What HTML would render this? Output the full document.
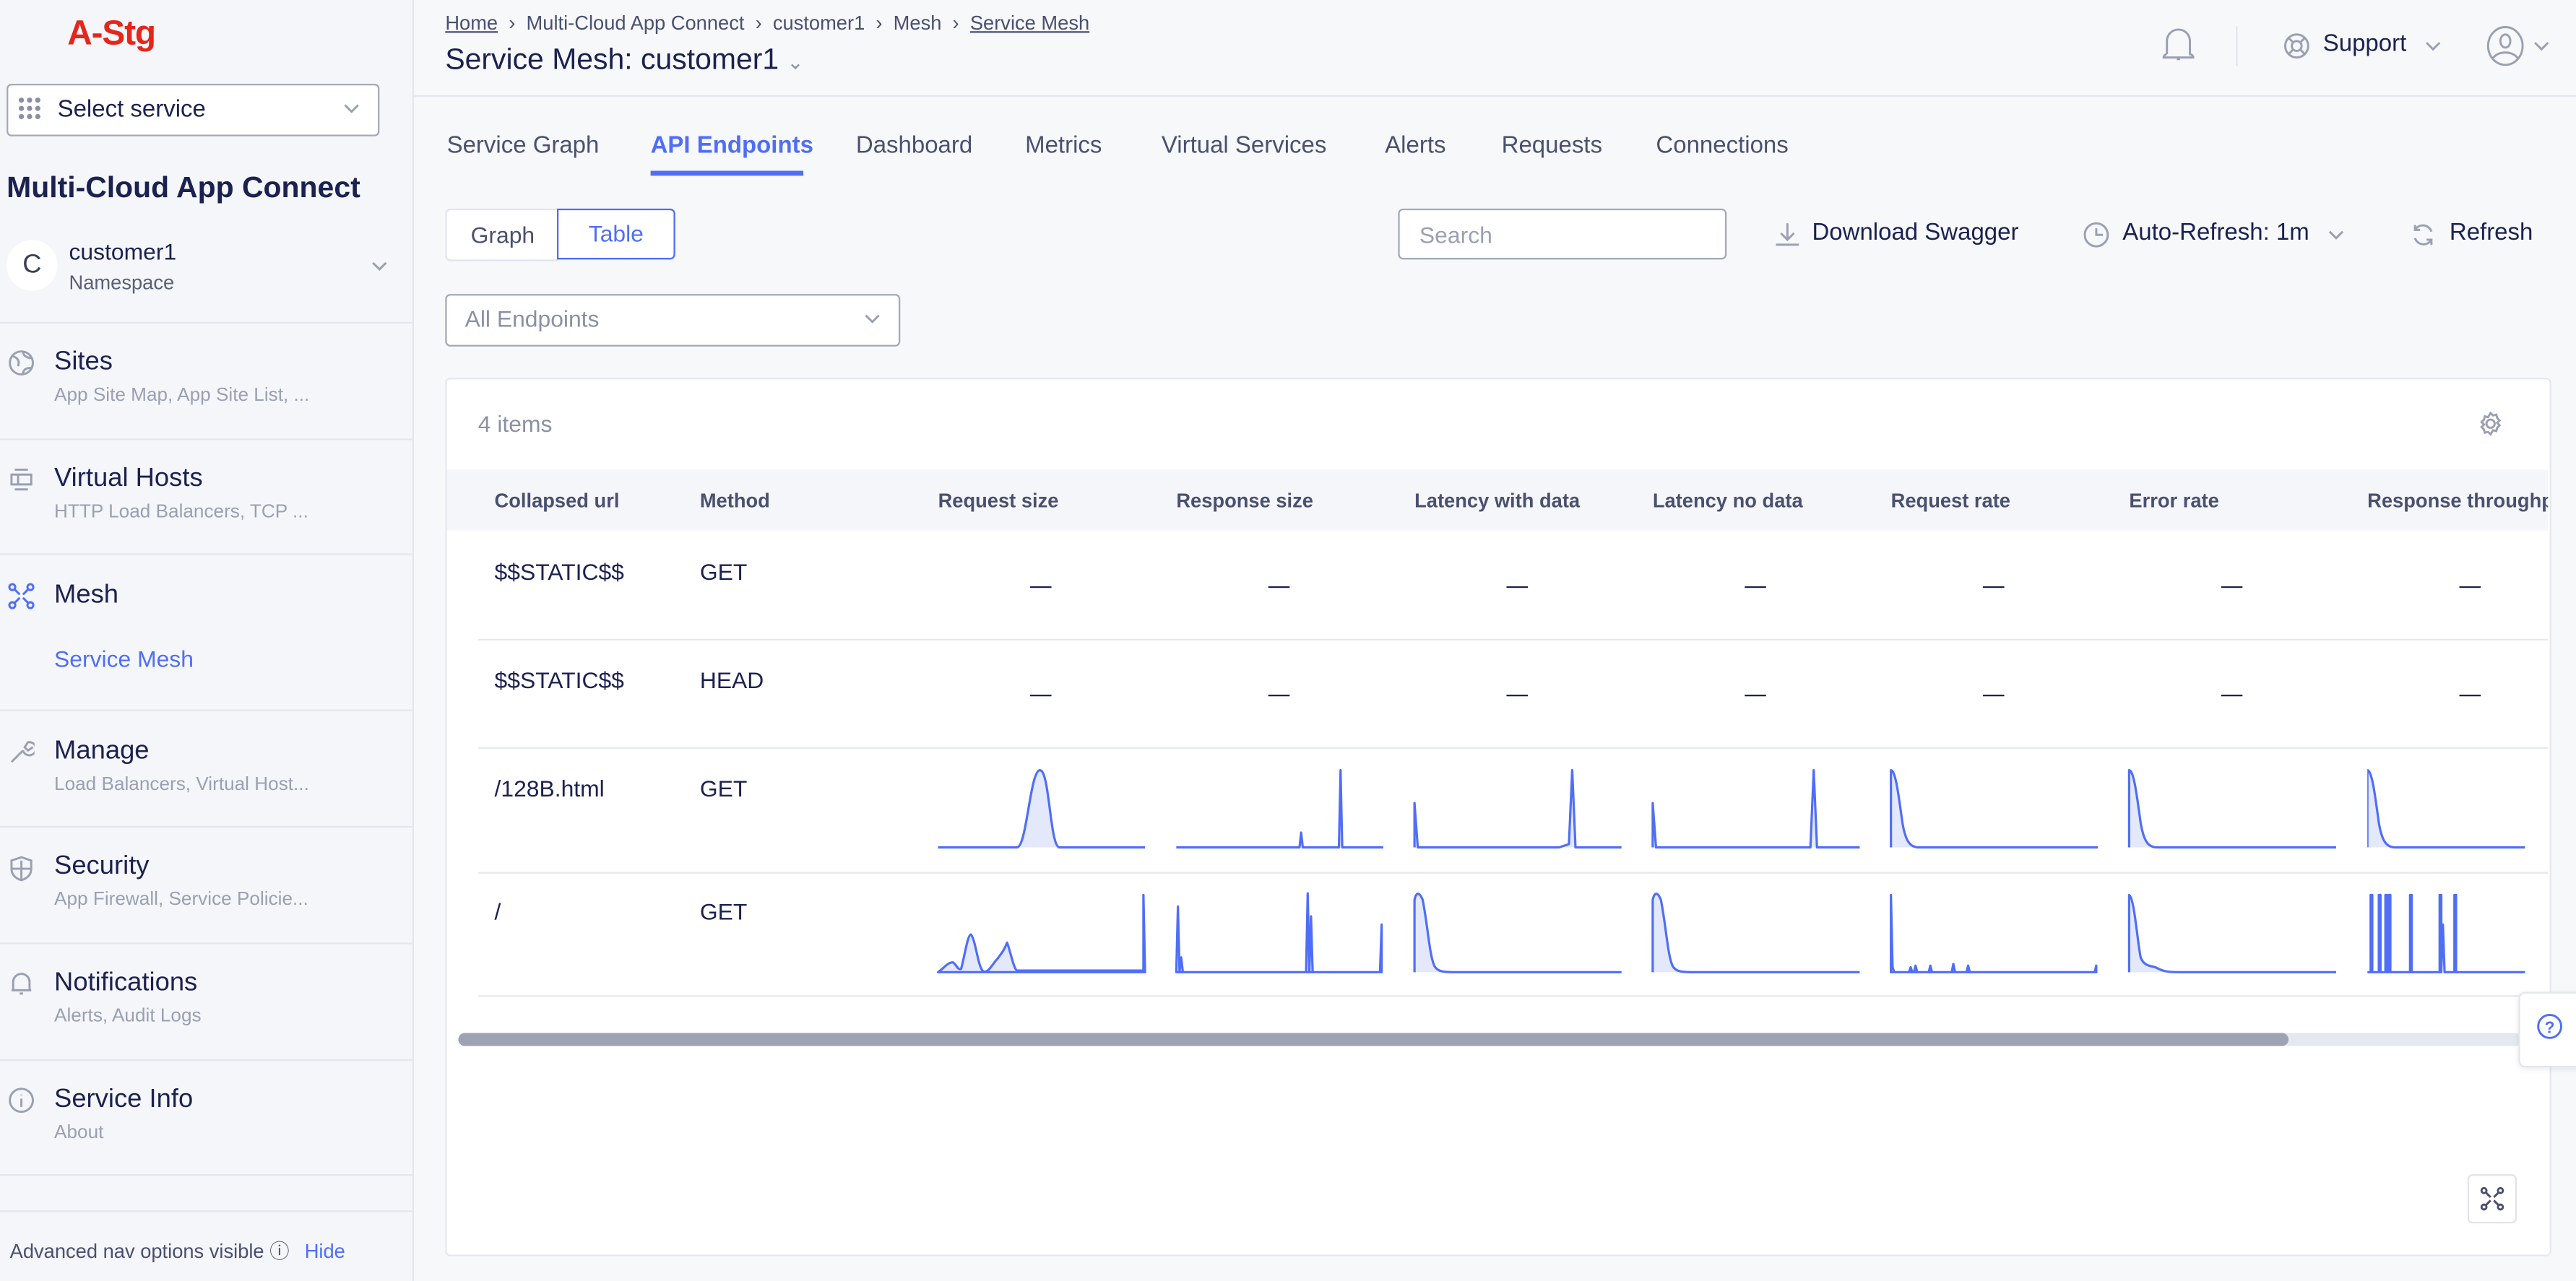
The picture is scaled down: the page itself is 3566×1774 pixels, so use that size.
<!DOCTYPE html>
<html><head><meta charset="utf-8"><style>
html,body{margin:0;padding:0;width:3566px;height:1773px;overflow:hidden;background:#f7f8fa}
#w{position:absolute;left:0;top:0;width:1568px;height:780px;transform:scale(2.27423);transform-origin:0 0;font-family:"Liberation Sans",sans-serif;color:#1b2150}
.a{position:absolute;white-space:nowrap}
.sb{position:absolute;left:0;top:0;width:251px;height:780px;background:#f5f6f9;border-right:1px solid #e4e6ee}
.hl{position:absolute;left:0;width:251px;height:1px;background:#e4e6ee}
.nt{font-size:16px;color:#1b2150}
.ns{font-size:11.5px;color:#9aa0b2}
.th{font-size:12px;color:#4a5070;font-weight:bold}
.td{font-size:14px;color:#1b2150}
.dash{position:absolute;width:13px;height:1.3px;background:#1b2150}
.rl{position:absolute;left:291px;width:1260px;height:1px;background:#e6e8f1}
svg.sp{position:absolute;width:126px;height:50px;overflow:visible}
svg.sp path{fill:#e3e8fb;stroke:#4f6ef7;stroke-width:1.4;stroke-linejoin:round}
.ic{position:absolute;stroke:#9aa0b2;fill:none;stroke-width:1.3}
.clip{position:absolute;left:1441px;width:96px;height:52px;overflow:hidden}
.clip svg.sp{left:0;top:0}
</style></head><body><div id="w">
<div class="sb">
 <div class="a" style="left:41px;top:9px;font-size:21px;font-weight:bold;color:#e5261b;letter-spacing:-0.5px">A-Stg</div>
 <div class="a" style="left:4px;top:51px;width:225px;height:30px;border:1px solid #a4a9b8;border-radius:3px;background:#fff"></div>
 <svg class="a" style="left:11px;top:59px" width="16" height="16"><g fill="#8a90a4"><circle cx="2" cy="2" r="1.6"/><circle cx="7" cy="2" r="1.6"/><circle cx="12" cy="2" r="1.6"/><circle cx="2" cy="7" r="1.6"/><circle cx="7" cy="7" r="1.6"/><circle cx="12" cy="7" r="1.6"/><circle cx="2" cy="12" r="1.6"/><circle cx="7" cy="12" r="1.6"/><circle cx="12" cy="12" r="1.6"/></g></svg>
 <div class="a" style="left:35px;top:59px;font-size:14.5px">Select service</div>
 <svg class="ic" style="left:209px;top:63px" width="10" height="6"><path d="M1 1l4 4 4-4"/></svg>
 <div class="a" style="left:4px;top:104px;font-size:18px;font-weight:bold">Multi-Cloud App Connect</div>
 <div class="a" style="left:4px;top:146px;width:31px;height:31px;border-radius:50%;background:#fff;font-size:16px;line-height:31px;text-align:center;color:#3a3f55">C</div>
 <div class="a" style="left:42px;top:145px;font-size:14px">customer1</div>
 <div class="a" style="left:42px;top:165px;font-size:12px;color:#5a6078">Namespace</div>
 <svg class="ic" style="left:226px;top:159px" width="10" height="6"><path d="M1 1l4 4 4-4"/></svg>
 <div class="hl" style="top:196px"></div>
 <svg class="ic" style="left:5px;top:213px" width="16" height="16"><circle cx="8" cy="8" r="7"/><path d="M3 4c3 1 4 3 3 6M9 1c0 3 3 4 5 4M9 15c0-3 2-4 5-4"/></svg>
 <div class="a nt" style="left:33px;top:212px">Sites</div>
 <div class="a ns" style="left:33px;top:235px">App Site Map, App Site List, ...</div>
 <div class="hl" style="top:267px"></div>
 <svg class="ic" style="left:5px;top:284px" width="16" height="16"><path d="M4 2h8M4 14h8M2 5h12v6H2zM6 5v6"/></svg>
 <div class="a nt" style="left:33px;top:283px">Virtual Hosts</div>
 <div class="a ns" style="left:33px;top:306px">HTTP Load Balancers, TCP ...</div>
 <div class="hl" style="top:337px"></div>
 <svg class="ic" style="left:5px;top:355px;stroke:#4f6ef7" width="16" height="16"><circle cx="2.5" cy="2.5" r="1.8"/><circle cx="13.5" cy="2.5" r="1.8"/><circle cx="2.5" cy="13.5" r="1.8"/><circle cx="13.5" cy="13.5" r="1.8"/><path d="M4 4l3 3M12 4l-3 3M4 12l3-3M12 12l-3-3"/></svg>
 <div class="a nt" style="left:33px;top:354px">Mesh</div>
 <div class="a" style="left:33px;top:393px;font-size:14px;color:#4f6ef7">Service Mesh</div>
 <div class="hl" style="top:432px"></div>
 <svg class="ic" style="left:5px;top:450px" width="16" height="16"><path d="M2 14l7-7M9 7a4 4 0 1 0 3-5l-2 3 2 2 3-2"/></svg>
 <div class="a nt" style="left:33px;top:449px">Manage</div>
 <div class="a ns" style="left:33px;top:472px">Load Balancers, Virtual Host...</div>
 <div class="hl" style="top:503px"></div>
 <svg class="ic" style="left:5px;top:521px" width="16" height="16"><path d="M8 1l6 2v5c0 4-3 6-6 7-3-1-6-3-6-7V3zM2 8h12M8 3v12"/></svg>
 <div class="a nt" style="left:33px;top:519px">Security</div>
 <div class="a ns" style="left:33px;top:542px">App Firewall, Service Policie...</div>
 <div class="hl" style="top:574px"></div>
 <svg class="ic" style="left:5px;top:591px" width="16" height="16"><path d="M3 12V7a5 5 0 0 1 10 0v5h1H2M7 14h2"/></svg>
 <div class="a nt" style="left:33px;top:590px">Notifications</div>
 <div class="a ns" style="left:33px;top:613px">Alerts, Audit Logs</div>
 <div class="hl" style="top:645px"></div>
 <svg class="ic" style="left:5px;top:662px" width="16" height="16"><circle cx="8" cy="8" r="7"/><path d="M8 7v5M8 4.5v.5"/></svg>
 <div class="a nt" style="left:33px;top:661px">Service Info</div>
 <div class="a ns" style="left:33px;top:684px">About</div>
 <div class="hl" style="top:715px"></div>
 <div class="hl" style="top:737px"></div>
 <div class="a" style="left:6px;top:753px;font-size:12px;color:#4a5070">Advanced nav options visible ⓘ <span style="color:#4f6ef7;margin-left:6px">Hide</span></div>
</div>

<div class="a" style="left:271px;top:7px;font-size:12px;color:#4a5070"><u>Home</u> &nbsp;›&nbsp; Multi-Cloud App Connect &nbsp;›&nbsp; customer1 &nbsp;›&nbsp; Mesh &nbsp;›&nbsp; <u>Service Mesh</u></div>
<div class="a" style="left:271px;top:26px;font-size:18px">Service Mesh: customer1 <span style="font-size:12px;color:#8a90a4">⌄</span></div>
<svg class="ic" style="left:1315px;top:15px" width="22" height="24"><path d="M4 18V10a7 7 0 0 1 14 0v8c1 0 2 1 2 2H2c0-1 1-2 2-2M10 21h2"/></svg>
<div class="a" style="left:1361px;top:16px;width:1px;height:24px;background:#e4e6ee"></div>
<svg class="ic" style="left:1390px;top:20px" width="16" height="16"><circle cx="8" cy="8" r="7"/><circle cx="8" cy="8" r="3"/><path d="M3 3l3 3M13 3l-3 3M3 13l3-3M13 13l-3-3"/></svg>
<div class="a" style="left:1414px;top:19px;font-size:14.5px">Support</div>
<svg class="ic" style="left:1476px;top:25px" width="10" height="6"><path d="M1 1l4 4 4-4"/></svg>
<svg class="ic" style="left:1513px;top:15px" width="24" height="26"><ellipse cx="12" cy="13" rx="10.5" ry="11.5"/><ellipse cx="12" cy="10" rx="3" ry="4"/><path d="M4 21c2-3 5-4 8-4s6 1 8 4"/></svg>
<svg class="ic" style="left:1542px;top:25px" width="10" height="6"><path d="M1 1l4 4 4-4"/></svg>
<div class="a" style="left:252px;top:58px;width:1316px;height:1px;background:#e4e6ee"></div>

<div class="a" style="left:272px;top:81px;font-size:14.5px;color:#4a5070">Service Graph</div>
<div class="a" style="left:396px;top:81px;font-size:14.5px;color:#4f6ef7;font-weight:bold">API Endpoints</div>
<div class="a" style="left:396px;top:104px;width:93px;height:3px;background:#4f6ef7"></div>
<div class="a" style="left:521px;top:81px;font-size:14.5px;color:#4a5070">Dashboard</div>
<div class="a" style="left:624px;top:81px;font-size:14.5px;color:#4a5070">Metrics</div>
<div class="a" style="left:707px;top:81px;font-size:14.5px;color:#4a5070">Virtual Services</div>
<div class="a" style="left:843px;top:81px;font-size:14.5px;color:#4a5070">Alerts</div>
<div class="a" style="left:914px;top:81px;font-size:14.5px;color:#4a5070">Requests</div>
<div class="a" style="left:1008px;top:81px;font-size:14.5px;color:#4a5070">Connections</div>

<div class="a" style="left:271px;top:127px;width:68px;height:30px;border:1px solid #e1e3ec;border-right:none;border-radius:3px 0 0 3px;background:#fff;font-size:14px;line-height:30px;text-align:center;color:#4a5070">Graph</div>
<div class="a" style="left:339px;top:127px;width:70px;height:29px;border:1px solid #4f6ef7;border-radius:0 3px 3px 0;background:#fff;font-size:14px;line-height:29px;text-align:center;color:#4f6ef7">Table</div>

<div class="a" style="left:851px;top:127px;width:198px;height:29px;border:1px solid #a4a9b8;border-radius:3px;background:#fff"></div>
<div class="a" style="left:864px;top:135px;font-size:14px;color:#9aa0b2">Search</div>
<svg class="ic" style="left:1080px;top:135px" width="16" height="16"><path d="M8 1v10M4 7l4 4 4-4M1 14h14"/></svg>
<div class="a" style="left:1103px;top:134px;font-size:14.5px">Download Swagger</div>
<svg class="ic" style="left:1268px;top:135px" width="16" height="16"><circle cx="8" cy="8" r="7"/><path d="M8 4v4h4"/></svg>
<div class="a" style="left:1292px;top:134px;font-size:14.5px">Auto-Refresh: 1m</div>
<svg class="ic" style="left:1417px;top:140px" width="10" height="6"><path d="M1 1l4 4 4-4"/></svg>
<svg class="ic" style="left:1467px;top:135px" width="16" height="16"><path d="M13 6a5.5 5.5 0 0 0-10-1M3 10a5.5 5.5 0 0 0 10 1M3 2v3h3M13 14v-3h-3"/></svg>
<div class="a" style="left:1491px;top:134px;font-size:14.5px">Refresh</div>

<div class="a" style="left:271px;top:179px;width:275px;height:30px;border:1px solid #a4a9b8;border-radius:3px;background:#fff"></div>
<div class="a" style="left:283px;top:186px;font-size:14px;color:#8a90a4">All Endpoints</div>
<svg class="ic" style="left:526px;top:191px" width="10" height="6"><path d="M1 1l4 4 4-4"/></svg>

<div class="a" style="left:271px;top:230px;width:1280px;height:533px;background:#fff;border:1px solid #e6e8f1;border-radius:3px;overflow:hidden"></div>
<div class="a" style="left:291px;top:250px;font-size:14px;color:#8a90a4">4 items</div>
<svg class="ic" style="left:1508px;top:250px" width="16" height="16"><circle cx="8" cy="8" r="2.5"/><path d="M8 1.5l1.5 1.5 2-.5.5 2 1.5 1.5-1.5 1.5 1.5 1.5-1.5 1.5-.5 2-2-.5L8 14.5 6.5 13l-2 .5-.5-2L2.5 10 4 8.5 2.5 7 4 5.5l.5-2 2 .5z"/></svg>
<div class="a" style="left:272px;top:286px;width:1279px;height:37px;background:#f5f6f9"></div>
<div class="a th" style="left:301px;top:298px">Collapsed url</div>
<div class="a th" style="left:426px;top:298px">Method</div>
<div class="a th" style="left:571px;top:298px">Request size</div>
<div class="a th" style="left:716px;top:298px">Response size</div>
<div class="a th" style="left:861px;top:298px">Latency with data</div>
<div class="a th" style="left:1006px;top:298px">Latency no data</div>
<div class="a th" style="left:1151px;top:298px">Request rate</div>
<div class="a th" style="left:1296px;top:298px">Error rate</div>
<div class="a th" style="left:1441px;top:298px;width:110px;overflow:hidden">Response throughput</div>

<div class="a td" style="left:301px;top:340px">$$STATIC$$</div><div class="a td" style="left:426px;top:340px">GET</div>
<div class="rl" style="top:389px"></div>
<div class="a td" style="left:301px;top:406px">$$STATIC$$</div><div class="a td" style="left:426px;top:406px">HEAD</div>
<div class="rl" style="top:455px"></div>
<div class="a td" style="left:301px;top:472px">/128B.html</div><div class="a td" style="left:426px;top:472px">GET</div>
<div class="rl" style="top:531px"></div>
<div class="a td" style="left:301px;top:547px">/</div><div class="a td" style="left:426px;top:547px">GET</div>
<div class="rl" style="top:606px"></div>

<div class="dash" style="left:627px;top:357px"></div><div class="dash" style="left:772px;top:357px"></div><div class="dash" style="left:917px;top:357px"></div><div class="dash" style="left:1062px;top:357px"></div><div class="dash" style="left:1207px;top:357px"></div><div class="dash" style="left:1352px;top:357px"></div><div class="dash" style="left:1497px;top:357px"></div>
<div class="dash" style="left:627px;top:423px"></div><div class="dash" style="left:772px;top:423px"></div><div class="dash" style="left:917px;top:423px"></div><div class="dash" style="left:1062px;top:423px"></div><div class="dash" style="left:1207px;top:423px"></div><div class="dash" style="left:1352px;top:423px"></div><div class="dash" style="left:1497px;top:423px"></div>

<svg class="sp" style="left:571px;top:467px" viewBox="0 0 126 50"><path d="M0 49H48C54 49 56 2 62 2S68 49 74 49H126"/></svg>
<svg class="sp" style="left:716px;top:467px" viewBox="0 0 126 50"><path d="M0 49H75L76 40L77 49H99L100 2L101 49H126"/></svg>
<svg class="sp" style="left:861px;top:467px" viewBox="0 0 126 50"><path d="M0 49V22L2 49H88L94 47L96 2L98 49H126"/></svg>
<svg class="sp" style="left:1006px;top:467px" viewBox="0 0 126 50"><path d="M0 49V22L2 49H96L98 2L100 49H126"/></svg>
<svg class="sp" style="left:1151px;top:467px" viewBox="0 0 126 50"><path d="M0 49V2C3 2 5 20 7 34C9 46 12 49 17 49C20 49 24 49 26 49H126"/></svg>
<svg class="sp" style="left:1296px;top:467px" viewBox="0 0 126 50"><path d="M0 49V2C3 2 5 20 7 34C9 46 12 49 17 49C20 49 24 49 26 49H126"/></svg>
<div class="clip" style="top:467px"><svg class="sp" viewBox="0 0 126 50"><path d="M0 49V2C3 2 5 20 7 34C9 46 12 49 17 49C20 49 24 49 26 49H126"/></svg></div>

<svg class="sp" style="left:571px;top:543px" viewBox="0 0 126 50"><path d="M0 49C4 46 6 43 9 43C11 44 12 48 14 47C16 40 18 26 20 26C23 30 24 44 27 48C30 51 33 44 36 41C39 37 40 36 42 31C44 36 46 47 48 48H125V2L126 49Z"/></svg>
<svg class="sp" style="left:716px;top:543px" viewBox="0 0 126 50"><path d="M0 49L1 9L2 49L3 40L4 49H79L80 1L81 49L82 15L83 49H124L125 20V49Z"/></svg>
<svg class="sp" style="left:861px;top:543px" viewBox="0 0 126 50"><path d="M0 49V5C1 0 3 0 5 5C8 20 9 38 12 45C14 49 18 49 26 49H126"/></svg>
<svg class="sp" style="left:1006px;top:543px" viewBox="0 0 126 50"><path d="M0 49V5C1 0 3 0 5 5C8 20 9 38 12 45C14 49 18 49 26 49H126"/></svg>
<svg class="sp" style="left:1151px;top:543px" viewBox="0 0 126 50"><path d="M0 49V2L1 46L2 49H11L12 46L13 49H14L15 45L16 49H23L24 45L25 49H37L38 44L39 49H46L47 45L48 49H124L125 45V49Z"/></svg>
<svg class="sp" style="left:1296px;top:543px" viewBox="0 0 126 50"><path d="M0 49V2C3 3 5 30 7 40C9 45 12 45 16 46C20 48 22 49 30 49H126"/></svg>
<div class="clip" style="top:543px"><svg class="sp" viewBox="0 0 126 50"><path style="fill:none" d="M0 49H2V2H3V49H7V2H8V49H11V2H12V49H13V2H14V49H26V2H27V49H44V2H45V49L46 20L47 49H53V2H54V49H126"/></svg></div>

<div class="a" style="left:279px;top:629px;width:1256px;height:8px;border-radius:4px;background:#e6e8f1"></div>
<div class="a" style="left:279px;top:629px;width:1114px;height:8px;border-radius:4px;background:#9ea3b3"></div>

<div class="a" style="left:1533px;top:604px;width:40px;height:44px;background:#fff;border:1px solid #e4e6ee;border-radius:4px;box-shadow:0 1px 4px rgba(0,0,0,.08)"></div>
<svg class="a" style="left:1544px;top:617px" width="16" height="16"><circle cx="8" cy="8" r="7" fill="none" stroke="#4f6ef7" stroke-width="1.3"/><text x="8" y="12" font-size="10" text-anchor="middle" fill="#4f6ef7" font-family="Liberation Sans" font-weight="bold">?</text></svg>
<div class="a" style="left:1502px;top:715px;width:28px;height:28px;background:#fff;border:1px solid #e1e3ec;border-radius:3px"></div>
<svg class="ic" style="left:1509px;top:722px;stroke:#4a5070" width="16" height="16"><circle cx="3" cy="3" r="1.5"/><circle cx="13" cy="3" r="1.5"/><circle cx="3" cy="13" r="1.5"/><circle cx="13" cy="13" r="1.5"/><path d="M4 4l3 3M12 4l-3 3M4 12l3-3M12 12l-3-3"/></svg>
</div></body></html>
